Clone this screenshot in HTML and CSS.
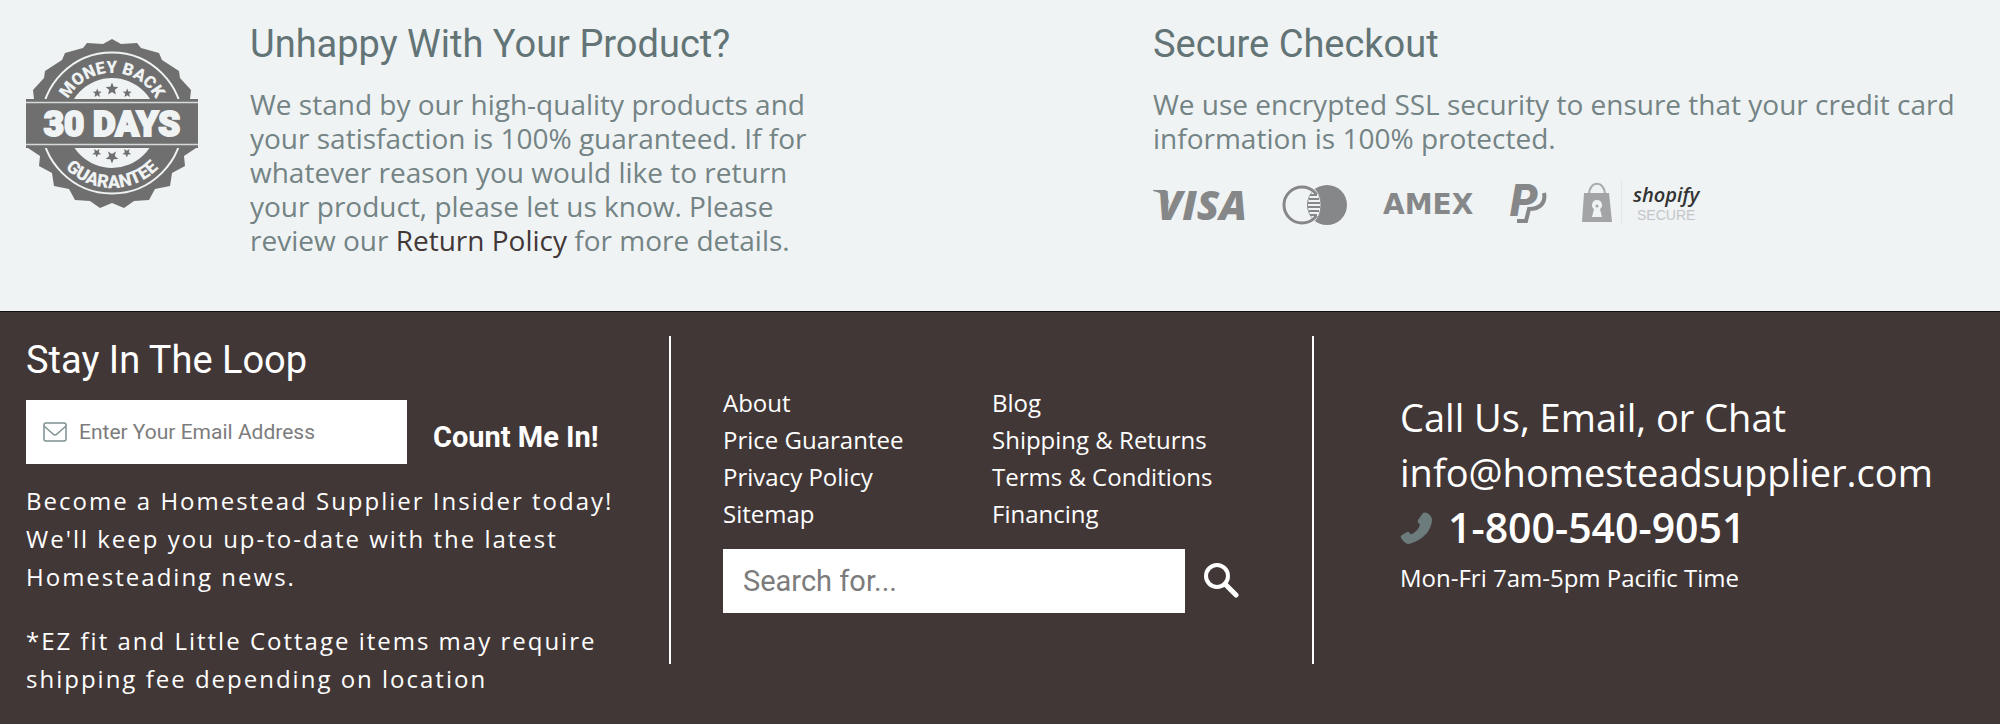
FILE: index.html
```html
<!DOCTYPE html>
<html lang="en">
    <head>
        <meta charset="utf-8">
        <title>Homestead Supplier</title>
        <link rel="stylesheet" href="styles.css">
    </head>
    <body>
        <section class="promises">
            <div class="promise">
                <svg class="seal" viewBox="0 0 172 170" role="img" aria-label="30 days money back guarantee">
                    <polygon fill="#6f6f6f" points="86,0 95,5 111,4 115,9 133,14 136,21 153,32 154,39 165,51 164,60 164,109 170,109 158,117 159,127 146,134 144,147 129,150 123,161 108,162 98,169 86,164 74,169 64,162 49,161 43,150 28,147 26,134 13,127 14,117 2,109 8,109 8,60 7,51 18,39 19,32 36,21 39,14 57,9 61,4 77,5"/>
                    <circle cx="86" cy="84" r="70.500" fill="none" stroke="#eff3f4" stroke-width="2"/>
                    <circle cx="86" cy="84" r="45" fill="#eff3f4"/>
                    <path id="arcTop" fill="none" d="M36 84 A50 50 0 0 1 136 84"/>
                    <path id="arcBottom" fill="none" d="M21 84 A65 65 0 0 0 151 84"/>
                    <text class="sealTop"><textPath href="#arcTop" startOffset="50%">MONEY BACK</textPath></text>
                    <text class="sealBottom"><textPath href="#arcBottom" startOffset="50%">GUARANTEE</textPath></text>
                    <g fill="#6f6f6f">
                        <path id="star" d="M86 43.500l1.700 4.300 4.600.3-3.500 3 1.100 4.500-3.900-2.500-3.900 2.500 1.100-4.500-3.500-3 4.600-.3z"/>
                        <use href="#star" transform="translate(11 19) scale(.7)"/>
                        <use href="#star" transform="translate(41 19) scale(.7)"/>
                        <use href="#star" transform="rotate(180 86 84)"/>
                        <use href="#star" transform="rotate(180 86 84) translate(11 19) scale(.7)"/>
                        <use href="#star" transform="rotate(180 86 84) translate(41 19) scale(.7)"/>
                    </g>
                    <rect x="0" y="60" width="172" height="49" fill="#6f6f6f"/>
                    <path d="M0 63.500H172M0 105.500H172" stroke="#d5d9da" stroke-width="1.500"/>
                    <text class="sealDays" x="86" y="97">30 DAYS</text>
                </svg>
                <div class="promiseText">
                    <h2>Unhappy With Your Product?</h2>
                    <p>We stand by our high-quality products and your satisfaction is 100% guaranteed. If for whatever reason you would like to return your product, please let us know. Please review our <a href="#">Return Policy</a> for more details.</p>
                </div>
            </div>
            <div class="secure">
                <h2>Secure Checkout</h2>
                <p>We use encrypted SSL security to ensure that your credit card information is 100% protected.</p>
                <div class="payments">
                    <svg width="94" height="44" role="img" aria-label="Visa">
                        <text class="visa" x="4" y="39">VISA</text>
                        <path fill="#868788" d="M0 9H13L17 26Q13 12 0 10z"/>
                    </svg>
                    <svg width="66" height="44" role="img" aria-label="Mastercard">
                        <circle cx="45" cy="24" r="20" fill="#868788"/>
                        <path fill="#eff3f4" d="M33 8Q39 15 39 24T33 40Q26 34 26 24T33 8z"/>
                        <circle cx="20" cy="24" r="18" fill="none" stroke="#868788" stroke-width="3"/>
                        <path fill="#eff3f4" d="M32 13H36Q41 24 36 35H32Z"/>
                        <path stroke="#868788" stroke-width="2" d="M28 14H35M27 18H37M26 22H38M26 26H38M27 30H37M28 34H35"/>
                    </svg>
                    <svg width="92" height="44" role="img" aria-label="American Express">
                        <text class="amex" x="0" y="33">AMEX</text>
                    </svg>
                    <svg width="38" height="44" role="img" aria-label="PayPal">
                        <path fill="none" stroke="#868788" stroke-width="4" d="M34 12C36 22 30 28 19 28L16 40H7"/>
                        <text class="paypal" x="0" y="35">P</text>
                    </svg>
                    <svg width="122" height="44" role="img" aria-label="Shopify Secure">
                        <path fill="none" stroke="#a9abad" stroke-width="2" d="M6 14C6 -1 22 -1 22 14"/>
                        <path fill="#a2a4a6" d="M1 12H26L29 41H-1z"/>
                        <path fill="#eff3f4" d="M14 19a5 5 0 0 1 3 9l2 8H9l2-8a5 5 0 0 1 3-9z"/>
                        <circle cx="14" cy="25" r="1.500" fill="#a2a4a6"/>
                        <path stroke="#e2e6e7" stroke-width="1" d="M38.500 0V44"/>
                        <text class="shopify" x="50" y="21">shopify</text>
                        <text class="shopifySecure" x="54" y="39">SECURE</text>
                    </svg>
                </div>
            </div>
        </section>

        <footer class="footer">
            <div class="loop">
                <h2>Stay In The Loop</h2>
                <form class="signup">
                    <label class="emailBox">
                        <svg width="24" height="20" viewBox="0 0 24 20" fill="none" stroke="#7d9092" stroke-width="1.500" aria-hidden="true">
                            <rect x="1" y="1" width="22" height="18" rx="2"/>
                            <path d="M1 4 L10 12 Q12 14 14 12 L23 4"/>
                        </svg>
                        <input type="email" placeholder="Enter Your Email Address" aria-label="Email address">
                    </label>
                    <button type="button">Count Me In!</button>
                </form>
                <p>Become a Homestead Supplier Insider today! We'll keep you up-to-date with the latest Homesteading news.</p>
                <p>*EZ fit and Little Cottage items may require shipping fee depending on location</p>
            </div>

            <div class="middle">
                <nav class="links">
                    <a href="#">About</a>
                    <a href="#">Blog</a>
                    <a href="#">Price Guarantee</a>
                    <a href="#">Shipping &amp; Returns</a>
                    <a href="#">Privacy Policy</a>
                    <a href="#">Terms &amp; Conditions</a>
                    <a href="#">Sitemap</a>
                    <a href="#">Financing</a>
                </nav>
                <form class="search">
                    <input type="search" placeholder="Search for..." aria-label="Search">
                    <button type="button" aria-label="Search">
                        <svg width="36" height="36" viewBox="0 0 36 36" fill="none" stroke="#fff" aria-hidden="true">
                            <circle cx="14" cy="14" r="11" stroke-width="4"/>
                            <path d="M22 22 L33 33" stroke-width="5" stroke-linecap="round"/>
                        </svg>
                    </button>
                </form>
            </div>

            <div class="contact">
                <p>Call Us, Email, or Chat</p>
                <p><a href="#">info@homesteadsupplier.com</a></p>
                <p class="phone">
                    <svg width="32" height="32" viewBox="0 0 32 32" aria-hidden="true">
                        <path fill="#6c7b7c" d="M23 1Q25 0 27 1Q31 3 32 7Q32 14 27 21Q20 29 9 32Q5 32 1 26Q0 24 2 23L7 20Q9 19 10 22L12 22Q19 18 20 12Q17 11 18 8Z"/>
                    </svg>
                    <a href="#">1-800-540-9051</a>
                </p>
                <p class="hours">Mon-Fri 7am-5pm Pacific Time</p>
            </div>
        </footer>
    </body>
</html>
```
FILE: styles.css
```css
body{
    margin: 0;
    font-family: 'Open Sans', sans-serif;
    background: #423737;
}
h2{
    margin: 0;
    font-family: Roboto, sans-serif;
    font-size: 38px;
    font-weight: 400;
    line-height: 48px;
}
p{
    margin: 0;
}
a{
    color: inherit;
    text-decoration: none;
}
.promises{
    display: grid;
    grid-template-columns: 1127fr 847fr;
    padding: 20px 0 54px 26px;
    background: #eff3f4;
    color: #748384;
}
.promises h2{
    color: #637476;
}
.promises p{
    margin-top: 19px;
    font-size: 28px;
    line-height: 34px;
}
.promise{
    display: flex;
}
.promise a{
    color: #423737;
}
.promiseText{
    width: 560px;
    margin-left: 52px;
}
.secure{
    padding-right: 40px;
}

/* money back seal */
.seal{
    width: 172px;
    height: 170px;
    margin-top: 19px;
}
.sealTop, .sealBottom, .sealDays{
    fill: #eff3f4;
    font-family: Roboto, sans-serif;
    font-weight: 900;
    text-anchor: middle;
}
.sealTop{
    font-size: 17px;
}
.sealBottom{
    font-size: 18px;
}
.sealDays{
    font-size: 35px;
    stroke: #eff3f4;
    stroke-width: 2px;
}

/* payment logos */
.payments{
    display: flex;
    gap: 35px;
    margin-top: 26px;
}
.payments text{
    fill: #868788;
}
.payments svg{
    overflow: visible;
}
.visa{
    font: italic 800 41px 'Open Sans', sans-serif;
}
.amex{
    font: bold 28px 'DejaVu Sans', sans-serif;
}
.paypal{
    font: italic 900 44px Roboto, sans-serif;
    stroke: #eff3f4;
    stroke-width: 3px;
    paint-order: stroke;
}
.payments .shopify{
    fill: #333;
    font: italic 600 20px 'Open Sans', sans-serif;
}
.payments .shopifySecure{
    fill: #c3c6c8;
    font: 14px 'Liberation Sans', sans-serif;
}

.footer{
    display: grid;
    grid-template-columns: 643fr 645fr 686fr;
    padding: 24px 0 0 26px;
    border-top: 1px solid #151111;
    color: #fff;
}
.signup{
    display: flex;
    margin: 16px 0 18px;
}
.emailBox{
    display: flex;
    align-items: center;
    width: 348px;
    height: 64px;
    padding: 0 16px 0 17px;
    background: #fff;
}
input{
    border: 0;
    outline: 0;
    background: #fff;
    font-family: Roboto, sans-serif;
}
input::placeholder{
    color: #7c7c7c;
}
.emailBox input{
    flex: 1;
    font-size: 21px;
    padding: 0 12px;
}
button{
    padding: 0;
    border: 0;
    background: none;
    color: #fff;
}
.signup button{
    margin-left: 26px;
    padding-top: 10px;
    font: 700 29px Roboto, sans-serif;
}
.loop p{
    width: 600px;
    margin-bottom: 26px;
    font-size: 24px;
    line-height: 38px;
    letter-spacing: 2px;
}
.middle{
    height: 328px;
    box-sizing: border-box;
    border-left: 2px solid #fff;
    border-right: 2px solid #fff;
    padding: 48px 52px 0;
}
.links{
    display: grid;
    grid-template-columns: 269px 1fr;
    font-size: 24px;
    line-height: 37px;
}
.search{
    display: flex;
    margin-top: 17px;
}
.search input{
    width: 462px;
    height: 64px;
    box-sizing: border-box;
    padding: 0 20px;
    font-size: 29px;
}
.search button{
    margin-left: 18px;
}
.contact{
    padding: 54px 0 0 86px;
    font-size: 38px;
    line-height: 55px;
}
.phone{
    display: flex;
    align-items: center;
    gap: 16px;
    font-size: 41px;
    font-weight: 600;
}
.hours{
    font-size: 24px;
    line-height: 46px;
}
```
